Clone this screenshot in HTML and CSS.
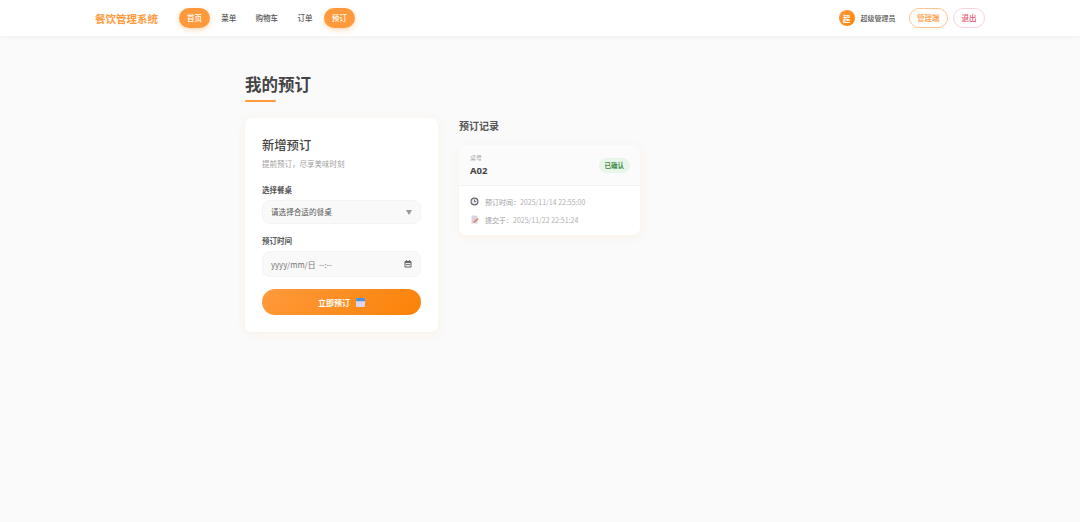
FILE: index.html
```html
<!DOCTYPE html>
<html lang="zh-CN">
<head>
<meta charset="utf-8">
<title>我的预订</title>
<link rel="stylesheet" href="styles.css">
</head>
<body>
<header class="topbar">
  <div class="brand">餐饮管理系统</div>
  <nav class="nav">
    <a class="nav-item is-active">首页</a>
    <a class="nav-item">菜单</a>
    <a class="nav-item">购物车</a>
    <a class="nav-item">订单</a>
    <a class="nav-item is-active">预订</a>
  </nav>
  <div class="user">
    <span class="avatar">超</span>
    <span class="user-name">超级管理员</span>
    <a class="pill pill-admin">管理端</a>
    <a class="pill pill-exit">退出</a>
  </div>
</header>
<main class="page">
  <h1 class="title">我的预订</h1>
  <div class="title-bar"></div>
  <div class="columns">
    <section class="form-card">
      <h2 class="form-title">新增预订</h2>
      <p class="form-sub">提前预订，尽享美味时刻</p>
      <div class="label label-first">选择餐桌</div>
      <div class="field">
        <span class="field-text">请选择合适的餐桌</span>
        <span class="caret"></span>
      </div>
      <div class="label">预订时间</div>
      <div class="field field-date">
        <span class="date-text">yyyy/mm/日&nbsp; --:--</span>
        <svg class="cal-icon" width="8" height="8" viewBox="0 0 8 8"><rect x="0.5" y="1" width="7" height="6.5" rx="1" fill="#666"/><rect x="1.5" y="3" width="5" height="3.5" fill="#eee"/><rect x="2" y="0" width="1" height="2" fill="#666"/><rect x="5" y="0" width="1" height="2" fill="#666"/><rect x="2" y="4" width="4" height="1" fill="#777"/></svg>
      </div>
      <button class="submit">立即预订
        <svg class="submit-icon" width="9" height="9" viewBox="0 0 9 9"><rect width="9" height="9" rx="1" fill="#d9d6ee"/><rect width="9" height="3.2" rx="1" fill="#4d90e8"/></svg>
      </button>
    </section>
    <section class="records">
      <h3 class="records-title">预订记录</h3>
      <article class="record">
        <div class="record-head">
          <div>
            <div class="record-label">桌号</div>
            <div class="record-no">A02</div>
          </div>
          <span class="badge">已确认</span>
        </div>
        <div class="record-body">
          <div class="line">
            <svg class="line-icon" width="9" height="9" viewBox="0 0 9 9"><circle cx="4.5" cy="4.5" r="4" fill="#6b6570"/><circle cx="4.5" cy="4.5" r="2.8" fill="#e8e6ea"/><path d="M4.5 2.6V4.6H6.2" stroke="#554f5a" stroke-width="0.8" fill="none"/></svg>
            <span class="line-text"><span class="line-key">预订时间：</span>2025/11/14 22:55:00</span>
          </div>
          <div class="line">
            <svg class="line-icon" width="9" height="9" viewBox="0 0 9 9"><path d="M1.5 0.5H6L7.5 2V8.5H1.5Z" fill="#d9d3e4"/><path d="M3 7L7.5 3L8.5 4L4.5 8Z" fill="#ee7f55"/></svg>
            <span class="line-text"><span class="line-key">提交于：</span>2025/11/22 22:51:24</span>
          </div>
        </div>
      </article>
    </section>
  </div>
</main>
</body>
</html>
```

FILE: styles.css
```css
* { box-sizing: border-box; }
html, body { margin: 0; padding: 0; }
body {
  width: 1080px;
  height: 522px;
  overflow: hidden;
  background: #fafafa;
  font-family: "Noto Sans CJK SC", "Noto Sans", sans-serif;
  color: #444;
}
.topbar {
  height: 36px;
  background: #fff;
  box-shadow: 0 1px 6px rgba(0,0,0,.05);
  padding: 0 95px;
  display: flex;
  align-items: center;
}
.brand {
  color: #ff9a3c;
  font-size: 10.5px;
  font-weight: 700;
  width: 84px;
  white-space: nowrap;
}
.nav { display: flex; gap: 3.3px; align-items: center; }
.nav-item {
  font-size: 7.5px;
  font-weight: 500;
  color: #555;
  height: 20px;
  line-height: 20px;
  padding: 0 8px;
  border-radius: 10px;
  white-space: nowrap;
}
.nav-item.is-active {
  background: #ff9a3c;
  color: #fff;
  box-shadow: 0 2px 5px rgba(255,154,60,.35);
}
.user { margin-left: auto; display: flex; align-items: center; }
.avatar {
  width: 16px; height: 16px; border-radius: 50%;
  background: linear-gradient(135deg,#ff9a3c,#fb8207);
  color: #fff; font-size: 7.5px; font-weight: 700;
  display: flex; align-items: center; justify-content: center;
}
.user-name { font-size: 7px; font-weight: 500; color: #555; margin-left: 6px; margin-right: 13px; white-space: nowrap; }
.pill {
  height: 20px; line-height: 18px; padding: 0 7.5px; font-size: 7.5px; font-weight: 500;
  border-radius: 10px; background: #fff; white-space: nowrap; border: 1px solid;
}
.pill-admin { color: #ff9a3c; border-color: #ffc48e; margin-right: 5px; }
.pill-exit { color: #e05570; border-color: #fad3da; }
.page { width: 590px; margin: 0 auto; padding-top: 36px; }
.title { margin: 0; font-size: 16.5px; line-height: 24px; font-weight: 700; color: #444; }
.title-bar { width: 31px; height: 2px; margin-top: 4px; background: #ff9a3c; border-radius: 1px; }
.columns { display: grid; grid-template-columns: 193px 1fr; gap: 21px; margin-top: 16px; align-items: start; }
.form-card {
  background: #fff; border-radius: 7px; padding: 18px 17px 17px;
  box-shadow: 0 2px 10px rgba(255,154,60,.1);
  height: 214px;
}
.form-title { margin: 0; font-size: 12.3px; line-height: 18px; font-weight: 500; color: #444; }
.form-sub { margin: 4px 0 0; font-size: 7.5px; line-height: 11px; color: #a0a0a0; }
.label { font-size: 7.5px; font-weight: 700; color: #555; line-height: 11px; margin-top: 11px; margin-bottom: 5px; }
.label-first { margin-top: 15px; }
.field {
  height: 24px; background: #f9f9f9; border: 1px solid #f3f3f3; border-radius: 8px;
  display: flex; align-items: center; justify-content: space-between; padding: 0 8px;
}
.field-date { height: 26px; }
.field-text { font-size: 7.6px; line-height: 10px; margin-top: -1px; color: #555; }
.caret { width: 0; height: 0; border-left: 3px solid transparent; border-right: 3px solid transparent; border-top: 5px solid #999; }
.date-text { font-size: 7.8px; color: #777; }
.submit {
  display: flex; width: 100%; height: 26px; margin-top: 12px; border: 0; border-radius: 13px;
  background: linear-gradient(135deg,#ff9a3c,#fb8207);
  color: #fff; font: 700 8px "Noto Sans CJK SC", sans-serif;
  align-items: center; justify-content: center; gap: 6px; padding: 0;
}
.records-title { margin: 0; padding-top: 1px; font-size: 10px; line-height: 14px; font-weight: 700; color: #555; }
.record {
  width: 181px; margin-top: 12px; background: #fff; border-radius: 7px; overflow: hidden;
  box-shadow: 0 2px 8px rgba(255,154,60,.1);
}
.record-head {
  height: 41px; background: #fbfbfb; border-bottom: 1px solid #f3f3f3;
  display: flex; align-items: center; justify-content: space-between; padding: 0 10px 0 11px;
}
.record-label { font-size: 6px; line-height: 8px; color: #aaa; }
.record-no { font-size: 9.5px; line-height: 13px; font-weight: 700; color: #444; margin-top: 2px; font-family: "Noto Sans", sans-serif; }
.badge { background: #e8f5e9; color: #3f8a45; font-size: 6.5px; font-weight: 700; height: 15px; line-height: 15px; padding: 0 6px; border-radius: 8px; }
.record-body { padding: 9px 11px; display: flex; flex-direction: column; gap: 5px; }
.line { display: flex; align-items: center; height: 13px; }
.line-icon { margin-right: 6px; }
.line-text { font-size: 7px; color: #b0b0b0; }
.line-key { color: #a0a0a0; }
```
